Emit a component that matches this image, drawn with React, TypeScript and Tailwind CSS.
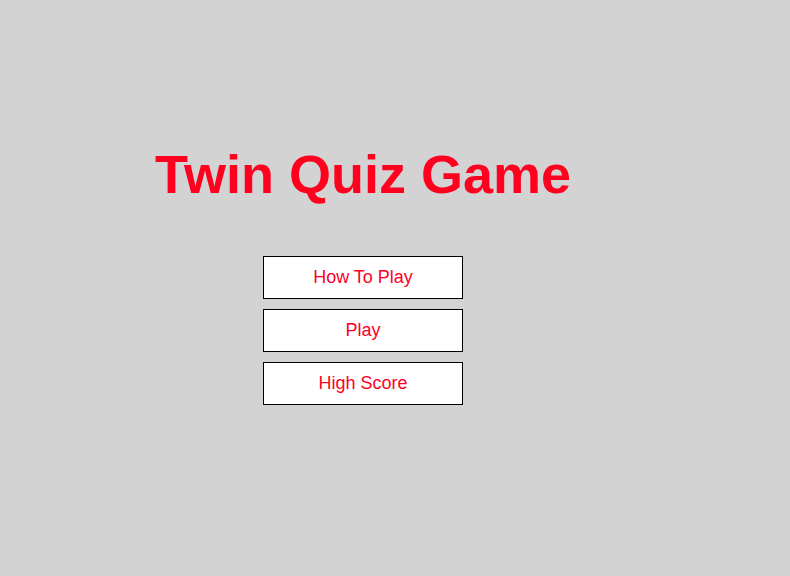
import React from 'react';

const menuItems = ['How To Play', 'Play', 'High Score'];

const App: React.FC = () => {
  return (
    <div className="min-h-screen w-full bg-[#d3d3d3] font-['Liberation_Sans',Arial,sans-serif]">
      <div className="w-[726px] flex flex-col items-center pt-[147px]">
        <h1 className="text-[54px] leading-none font-bold text-[#ff001f]">Twin Quiz Game</h1>

        <div className="mt-[55px] flex flex-col gap-[10px]">
          {menuItems.map((item) => (
            <button
              key={item}
              className="w-[200px] h-[43px] bg-white border border-black text-[18px] text-[#ff001f] flex items-center justify-center"
            >
              {item}
            </button>
          ))}
        </div>
      </div>
    </div>
  );
};

export default App;
